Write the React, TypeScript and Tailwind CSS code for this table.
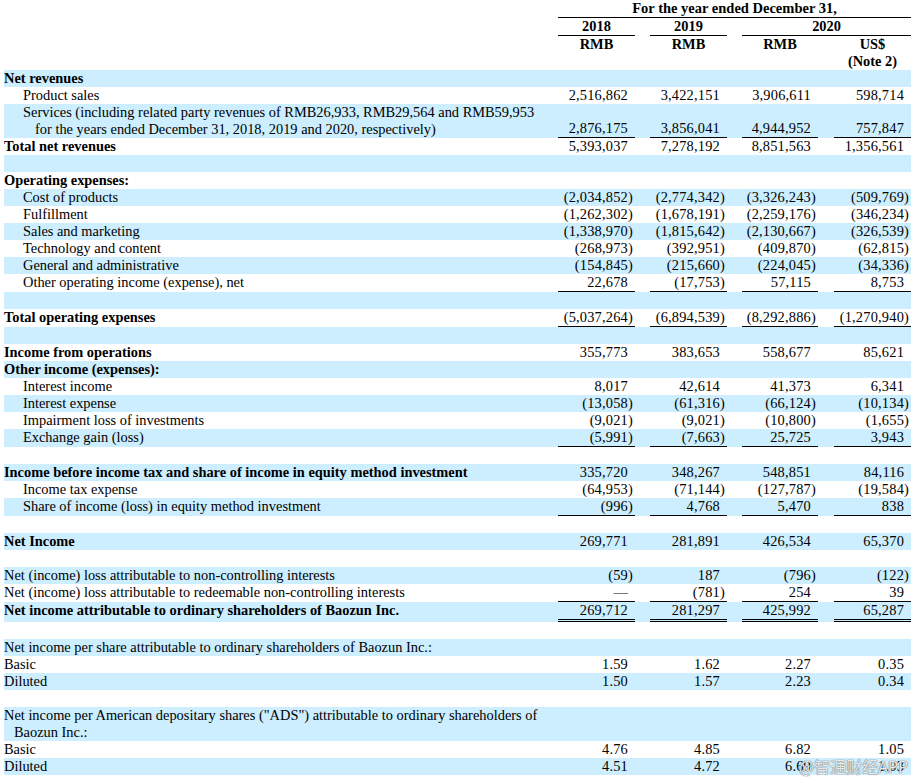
import React from 'react';

type Row = {
  label?: React.ReactNode;
  kind?: 'bold' | 'item' | 'plain' | 'services' | 'ads';
  values?: string[];
  line?: 'single' | 'double';
};

const rows: Row[] = [
  { label: 'Net revenues', kind: 'bold' },
  { label: 'Product sales', kind: 'item', values: ['2,516,862', '3,422,151', '3,906,611', '598,714'] },
  {
    label: (
      <>
        Services (including related party revenues of RMB26,933, RMB29,564 and RMB59,953
        <br />
        for the years ended December 31, 2018, 2019 and 2020, respectively)
      </>
    ),
    kind: 'services',
    values: ['2,876,175', '3,856,041', '4,944,952', '757,847'],
    line: 'single',
  },
  { label: 'Total net revenues', kind: 'bold', values: ['5,393,037', '7,278,192', '8,851,563', '1,356,561'] },
  {},
  { label: 'Operating expenses:', kind: 'bold' },
  { label: 'Cost of products', kind: 'item', values: ['(2,034,852)', '(2,774,342)', '(3,326,243)', '(509,769)'] },
  { label: 'Fulfillment', kind: 'item', values: ['(1,262,302)', '(1,678,191)', '(2,259,176)', '(346,234)'] },
  { label: 'Sales and marketing', kind: 'item', values: ['(1,338,970)', '(1,815,642)', '(2,130,667)', '(326,539)'] },
  { label: 'Technology and content', kind: 'item', values: ['(268,973)', '(392,951)', '(409,870)', '(62,815)'] },
  { label: 'General and administrative', kind: 'item', values: ['(154,845)', '(215,660)', '(224,045)', '(34,336)'] },
  {
    label: 'Other operating income (expense), net',
    kind: 'item',
    values: ['22,678', '(17,753)', '57,115', '8,753'],
    line: 'single',
  },
  {},
  {
    label: 'Total operating expenses',
    kind: 'bold',
    values: ['(5,037,264)', '(6,894,539)', '(8,292,886)', '(1,270,940)'],
    line: 'single',
  },
  {},
  { label: 'Income from operations', kind: 'bold', values: ['355,773', '383,653', '558,677', '85,621'] },
  { label: 'Other income (expenses):', kind: 'bold' },
  { label: 'Interest income', kind: 'item', values: ['8,017', '42,614', '41,373', '6,341'] },
  { label: 'Interest expense', kind: 'item', values: ['(13,058)', '(61,316)', '(66,124)', '(10,134)'] },
  { label: 'Impairment loss of investments', kind: 'item', values: ['(9,021)', '(9,021)', '(10,800)', '(1,655)'] },
  {
    label: 'Exchange gain (loss)',
    kind: 'item',
    values: ['(5,991)', '(7,663)', '25,725', '3,943'],
    line: 'single',
  },
  {},
  {
    label: 'Income before income tax and share of income in equity method investment',
    kind: 'bold',
    values: ['335,720', '348,267', '548,851', '84,116'],
  },
  { label: 'Income tax expense', kind: 'item', values: ['(64,953)', '(71,144)', '(127,787)', '(19,584)'] },
  {
    label: 'Share of income (loss) in equity method investment',
    kind: 'item',
    values: ['(996)', '4,768', '5,470', '838'],
    line: 'single',
  },
  {},
  { label: 'Net Income', kind: 'bold', values: ['269,771', '281,891', '426,534', '65,370'] },
  {},
  { label: 'Net (income) loss attributable to non-controlling interests', kind: 'plain', values: ['(59)', '187', '(796)', '(122)'] },
  {
    label: 'Net (income) loss attributable to redeemable non-controlling interests',
    kind: 'plain',
    values: ['—', '(781)', '254', '39'],
    line: 'single',
  },
  {
    label: 'Net income attributable to ordinary shareholders of Baozun Inc.',
    kind: 'bold',
    values: ['269,712', '281,297', '425,992', '65,287'],
    line: 'double',
  },
  {},
  { label: 'Net income per share attributable to ordinary shareholders of Baozun Inc.:', kind: 'plain' },
  { label: 'Basic', kind: 'plain', values: ['1.59', '1.62', '2.27', '0.35'] },
  { label: 'Diluted', kind: 'plain', values: ['1.50', '1.57', '2.23', '0.34'] },
  {},
  {
    label: (
      <>
        Net income per American depositary shares ("ADS") attributable to ordinary shareholders of
        <br />
        Baozun Inc.:
      </>
    ),
    kind: 'ads',
  },
  { label: 'Basic', kind: 'plain', values: ['4.76', '4.85', '6.82', '1.05'] },
  { label: 'Diluted', kind: 'plain', values: ['4.51', '4.72', '6.69', '1.03'] },
];

const labelClass = {
  bold: 'font-bold',
  item: 'pl-[19px]',
  plain: '',
  services: 'pl-[31px] -indent-[12px]',
  ads: 'pl-[10px] -indent-[10px]',
};

function Num({ v, line }: { v?: string; line?: 'single' | 'double' }) {
  const border =
    line === 'single'
      ? 'border-b border-black'
      : line === 'double'
        ? 'border-b-[3px] border-double border-black'
        : '';
  if (!v) return <td className={border} />;
  const closed = v.endsWith(')');
  return (
    <td className={`text-right align-bottom pr-[2px] whitespace-nowrap tracking-[0.2px] ${border}`}>
      {v}
      {!closed && <span className="invisible">)</span>}
    </td>
  );
}

export default function App() {
  return (
    <div className="relative w-[918px] h-[783px] overflow-hidden bg-white text-black font-['Liberation_Serif','Times_New_Roman',serif] text-[14.4px] leading-[17px]">
      <table className="ml-[4px] w-[907px] table-fixed border-separate border-spacing-0">
        <colgroup>
          <col className="w-[554px]" />
          <col className="w-[77px]" />
          <col className="w-[15px]" />
          <col className="w-[77px]" />
          <col className="w-[15px]" />
          <col className="w-[76px]" />
          <col className="w-[16px]" />
          <col className="w-[77px]" />
        </colgroup>
        <thead className="font-bold text-center">
          <tr>
            <td />
            <td colSpan={7} className="border-b border-black text-[14.5px]">
              For the year ended December 31,
            </td>
          </tr>
          <tr>
            <td />
            <td className="border-b border-black">2018</td>
            <td />
            <td className="border-b border-black">2019</td>
            <td />
            <td colSpan={3} className="border-b border-black">
              2020
            </td>
          </tr>
          <tr>
            <td />
            <td>RMB</td>
            <td />
            <td>RMB</td>
            <td />
            <td>RMB</td>
            <td />
            <td>US$</td>
          </tr>
          <tr>
            <td />
            <td />
            <td />
            <td />
            <td />
            <td />
            <td />
            <td>(Note 2)</td>
          </tr>
        </thead>
        <tbody>
          {rows.map((row, i) => (
            <tr key={i} className={i % 2 === 0 ? 'bg-[#cceeff]' : 'bg-white'}>
              <td className={`text-left align-top whitespace-nowrap ${row.kind ? labelClass[row.kind] : ''}`}>
                {row.label ?? '\u00a0'}
              </td>
              <Num v={row.values?.[0]} line={row.line} />
              <td />
              <Num v={row.values?.[1]} line={row.line} />
              <td />
              <Num v={row.values?.[2]} line={row.line} />
              <td />
              <Num v={row.values?.[3]} line={row.line} />
            </tr>
          ))}
        </tbody>
      </table>
      <span className="absolute left-[799px] top-[756px] text-[16px] leading-[20px] font-['Noto_Sans_CJK_SC',sans-serif] text-white/85 [text-shadow:0_0_1px_#666,0_0_1px_#666]">
        @智通财经APP
      </span>
    </div>
  );
}
